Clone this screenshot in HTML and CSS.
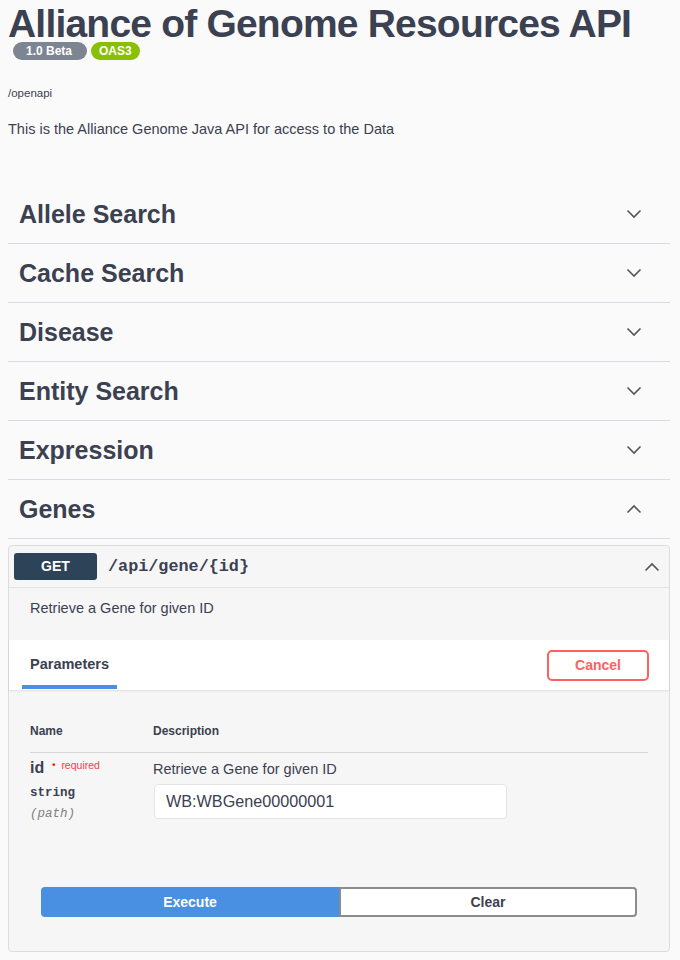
FILE: index.html
```html
<!DOCTYPE html>
<html>
<head>
<meta charset="utf-8">
<link rel="stylesheet" href="styles.css">
</head>
<body>
<div class="page">
  <div class="info">
    <h1 class="title">Alliance of Genome Resources API</h1>
    <div class="badges">
      <span class="badge badge-version">1.0 Beta</span>
      <span class="badge badge-oas">OAS3</span>
    </div>
    <p class="url">/openapi</p>
    <p class="desc">This is the Alliance Genome Java API for access to the Data</p>
  </div>

  <div class="tags">
    <div class="tag"><span class="tag-name">Allele Search</span><svg class="chev" viewBox="0 0 16 10" width="16" height="10"><path d="M1.5 1.5 L8 8 L14.5 1.5"/></svg></div>
    <div class="tag"><span class="tag-name">Cache Search</span><svg class="chev" viewBox="0 0 16 10" width="16" height="10"><path d="M1.5 1.5 L8 8 L14.5 1.5"/></svg></div>
    <div class="tag"><span class="tag-name">Disease</span><svg class="chev" viewBox="0 0 16 10" width="16" height="10"><path d="M1.5 1.5 L8 8 L14.5 1.5"/></svg></div>
    <div class="tag"><span class="tag-name">Entity Search</span><svg class="chev" viewBox="0 0 16 10" width="16" height="10"><path d="M1.5 1.5 L8 8 L14.5 1.5"/></svg></div>
    <div class="tag"><span class="tag-name">Expression</span><svg class="chev" viewBox="0 0 16 10" width="16" height="10"><path d="M1.5 1.5 L8 8 L14.5 1.5"/></svg></div>
    <div class="tag"><span class="tag-name">Genes</span><svg class="chev" viewBox="0 0 16 10" width="16" height="10"><path d="M1.5 8.5 L8 2 L14.5 8.5"/></svg></div>
  </div>

  <div class="opblock">
    <div class="op-summary">
      <span class="method">GET</span>
      <span class="path">/api/gene/{id}</span>
      <svg class="chev op-chev" viewBox="0 0 16 10" width="16" height="10"><path d="M1.5 8.5 L8 2 L14.5 8.5"/></svg>
    </div>
    <div class="op-desc">Retrieve a Gene for given ID</div>
    <div class="params-header">
      <div class="tab">Parameters</div>
      <button class="btn-cancel">Cancel</button>
    </div>
    <div class="params">
      <div class="params-table">
        <div class="th">Name</div>
        <div class="th">Description</div>
        <div class="td name-cell">
          <div class="pname">id<span class="req-dot">•</span><span class="req">required</span></div>
          <div class="ptype">string</div>
          <div class="pin">(path)</div>
        </div>
        <div class="td desc-cell">
          <div class="pdesc">Retrieve a Gene for given ID</div>
          <div class="input">WB:WBGene00000001</div>
        </div>
      </div>
      <div class="actions">
        <button class="btn-exec">Execute</button>
        <button class="btn-clear">Clear</button>
      </div>
    </div>
  </div>
</div>
</body>
</html>
```

FILE: styles.css
```css
html, body {
  margin: 0;
  padding: 0;
  background: #fafafa;
}
body {
  font-family: "Liberation Sans", Arial, sans-serif;
  color: #3b4151;
}
.page {
  padding: 0 10px 0 8px;
}
.title {
  margin: 0;
  padding-top: 5px;
  font-size: 39px;
  letter-spacing: -0.8px;
  line-height: 38px;
  font-weight: bold;
  color: #3b4151;
  white-space: nowrap;
}
.badges {
  display: flex;
  gap: 4px;
  margin: -1px 0 0 5px;
}
.badge {
  display: inline-block;
  height: 18px;
  line-height: 18px;
  border-radius: 9px;
  font-size: 12px;
  font-weight: bold;
  color: #fff;
}
.badge-version {
  background: #7d8492;
  padding: 0 15px 0 13px;
}
.badge-oas {
  background: #89bf04;
  padding: 0 8px;
}
.url {
  margin: 26px 0 0;
  font-size: 11.5px;
  line-height: 14px;
}
.desc {
  margin: 21px 0 0;
  font-size: 14.5px;
  line-height: 16px;
}
.tags {
  margin-top: 48px;
}
.tag {
  display: flex;
  align-items: center;
  justify-content: space-between;
  height: 58px;
  border-bottom: 1px solid #d9dbe0;
  padding: 0 28px 0 11px;
}
.tag-name {
  font-size: 25px;
  font-weight: bold;
  color: #3b4151;
}
.chev {
  fill: none;
  stroke: #555;
  stroke-width: 1.6;
}
.opblock {
  margin-top: 6px;
  border: 1px solid #dcdcdc;
  border-radius: 4px;
  background: #f6f6f6;
}
.op-summary {
  display: flex;
  align-items: center;
  height: 41px;
  padding: 0 9px 0 5px;
  border-bottom: 1px solid #e2e2e2;
}
.method {
  width: 83px;
  height: 27px;
  line-height: 27px;
  text-align: center;
  background: #2d4358;
  color: #fff;
  border-radius: 3px;
  font-size: 14px;
  font-weight: bold;
}
.path {
  margin-left: 11px;
  font-family: "Liberation Mono", "DejaVu Sans Mono", monospace;
  font-weight: bold;
  font-size: 16.8px;
  color: #3b4151;
  flex: 1;
}
.op-desc {
  padding: 12px 21px 24px;
  font-size: 14.5px;
  line-height: 16px;
}
.params-header {
  display: flex;
  align-items: stretch;
  justify-content: space-between;
  height: 50px;
  background: #fff;
  padding: 0 20px 0 13px;
  box-shadow: 0 1px 2px rgba(0, 0, 0, 0.1);
}
.tab {
  display: flex;
  align-items: center;
  padding: 2px 8px 0;
  font-size: 14.5px;
  font-weight: bold;
  border-bottom: 4px solid #4990e2;
  margin-bottom: 1px;
}
.btn-cancel {
  align-self: center;
  width: 102px;
  height: 31px;
  background: #fff;
  border: 2px solid #ff6060;
  border-radius: 5px;
  color: #ff6060;
  font-family: "Liberation Sans", Arial, sans-serif;
  font-size: 14px;
  font-weight: bold;
}
.params {
  padding: 34px 21px 34px;
}
.params-table {
  display: grid;
  grid-template-columns: 123px 1fr;
}
.th {
  font-size: 12px;
  font-weight: bold;
  line-height: 14px;
  padding-bottom: 14px;
  border-bottom: 1px solid #d8d8d8;
}
.td {
  padding-top: 7px;
}
.pname {
  font-size: 16px;
  font-weight: bold;
  line-height: 16px;
}
.req-dot {
  color: #f00;
  font-size: 9px;
  vertical-align: top;
  margin-left: 8px;
  line-height: 10px;
}
.req {
  color: #ff3b3b;
  font-size: 10.5px;
  font-weight: normal;
  vertical-align: top;
  margin-left: 6px;
  line-height: 10px;
}
.ptype {
  margin-top: 10px;
  font-family: "Liberation Mono", "DejaVu Sans Mono", monospace;
  font-weight: bold;
  font-size: 12.5px;
  line-height: 14px;
}
.pin {
  margin-top: 7px;
  font-family: "Liberation Mono", "DejaVu Sans Mono", monospace;
  font-style: italic;
  font-size: 12.5px;
  line-height: 14px;
  color: #808080;
}
.pdesc {
  font-size: 14.5px;
  line-height: 16px;
  padding-top: 1px;
}
.input {
  margin-top: 7px;
  margin-left: 1px;
  width: 340px;
  height: 33px;
  line-height: 33px;
  padding-left: 11px;
  background: #fff;
  border: 1px solid #e4e4e4;
  border-radius: 4px;
  font-size: 16.2px;
  color: #3b4151;
}
.actions {
  display: flex;
  margin: 66px 11px 0;
}
.btn-exec, .btn-clear {
  flex: 1;
  height: 30px;
  font-family: "Liberation Sans", Arial, sans-serif;
  font-size: 14px;
  font-weight: bold;
}
.btn-exec {
  background: #4990e2;
  color: #fff;
  border: 2px solid #4990e2;
  border-radius: 4px 0 0 4px;
}
.btn-clear {
  background: #fff;
  color: #3b4151;
  border: 2px solid #8c8c8c;
  border-radius: 0 4px 4px 0;
}
```
